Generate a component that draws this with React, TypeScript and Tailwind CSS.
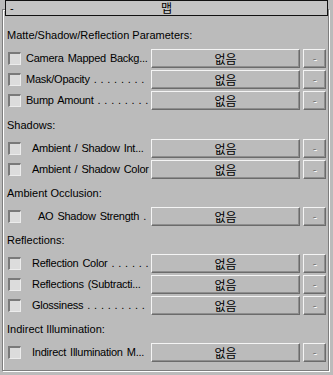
import React from "react";

const F = { fontFamily: '"Liberation Sans", Arial, sans-serif' };
const K = { fontFamily: '"Noto Sans CJK KR", "Liberation Sans", sans-serif' };

function Row({ label, indent }: { label: string; indent: number }) {
  return (
    <div className="flex h-[19px] items-center pl-[5px] pr-[2px]">
      <div className="h-[13px] w-[13px] shrink-0 border-t-2 border-l-2 border-b border-r border-t-[#7a7a7a] border-l-[#7a7a7a] border-b-[#ececec] border-r-[#ececec] bg-[#dcdcdc]" />
      <div
        className="min-w-0 flex-1 overflow-hidden whitespace-nowrap text-[11px] leading-[19px] tracking-[-0.25px] text-black [word-spacing:1.2px]"
        style={{ ...F, paddingLeft: indent }}
      >
        {label}
      </div>
      <div
        className="flex h-[19px] w-[149px] shrink-0 items-center justify-center border border-t-[#f4f4f4] border-l-[#f4f4f4] border-r-[#6b6b6b] border-b-[#6b6b6b] bg-[#bbbbbb] text-[12px] leading-none text-black shadow-[inset_-1px_-1px_0_#8e8e8e]"
        style={K}
      >
        없음
      </div>
      <div
        className="ml-[3px] flex h-[19px] w-[23px] shrink-0 items-center justify-center border border-t-[#f4f4f4] border-l-[#f4f4f4] border-r-[#6b6b6b] border-b-[#6b6b6b] bg-[#bbbbbb] text-[11px] leading-none text-[#777777] shadow-[inset_-1px_-1px_0_#8e8e8e] [text-shadow:1px_1px_0_#ffffff]"
        style={F}
      >
        -
      </div>
    </div>
  );
}

function Heading({ text, h }: { text: string; h: number }) {
  return (
    <div
      className="flex items-center pl-[4px] text-[11px] leading-[14px] text-black"
      style={{ ...F, height: h }}
    >
      {text}
    </div>
  );
}

export default function App() {
  return (
    <div className="h-[375px] w-[333px] overflow-hidden bg-[#bbbbbb]">
      <div className="relative z-10 ml-[5px] flex h-[16px] w-[323px] items-center border border-[#111111] bg-[#c4c4c4] text-black">
        <span className="pl-[4px] text-[11px] leading-none" style={F}>
          -
        </span>
        <span
          className="absolute left-1/2 top-1/2 -translate-x-1/2 -translate-y-1/2 text-[12px] leading-none"
          style={K}
        >
          맵
        </span>
      </div>
      <div className="-mt-[7px] ml-[2px] h-[362px] w-[327px] border border-[#7e7e7e] shadow-[inset_1px_1px_0_#ffffff,1px_1px_0_#ffffff]">
        <div
          className="flex h-[39px] items-end pb-[7px] pl-[4px] text-[11px] leading-[14px] text-black"
          style={F}
        >
          Matte/Shadow/Reflection Parameters:
        </div>
        <div className="flex flex-col gap-[2px]">
          <Row label="Camera Mapped Backg..." indent={5} />
          <Row label="Mask/Opacity . . . . . . . ." indent={5} />
          <Row label="Bump Amount . . . . . . . ." indent={5} />
        </div>
        <Heading text="Shadows:" h={29} />
        <div className="flex flex-col gap-[2px]">
          <Row label="Ambient / Shadow Int..." indent={11} />
          <Row label="Ambient / Shadow Color" indent={11} />
        </div>
        <Heading text="Ambient Occlusion:" h={28} />
        <Row label="AO Shadow Strength ." indent={17} />
        <Heading text="Reflections:" h={28} />
        <div className="flex flex-col gap-[2px]">
          <Row label="Reflection Color . . . . . ." indent={11} />
          <Row label="Reflections (Subtracti..." indent={11} />
          <Row label="Glossiness . . . . . . . . ." indent={11} />
        </div>
        <Heading text="Indirect Illumination:" h={28} />
        <Row label="Indirect Illumination M..." indent={11} />
      </div>
    </div>
  );
}
